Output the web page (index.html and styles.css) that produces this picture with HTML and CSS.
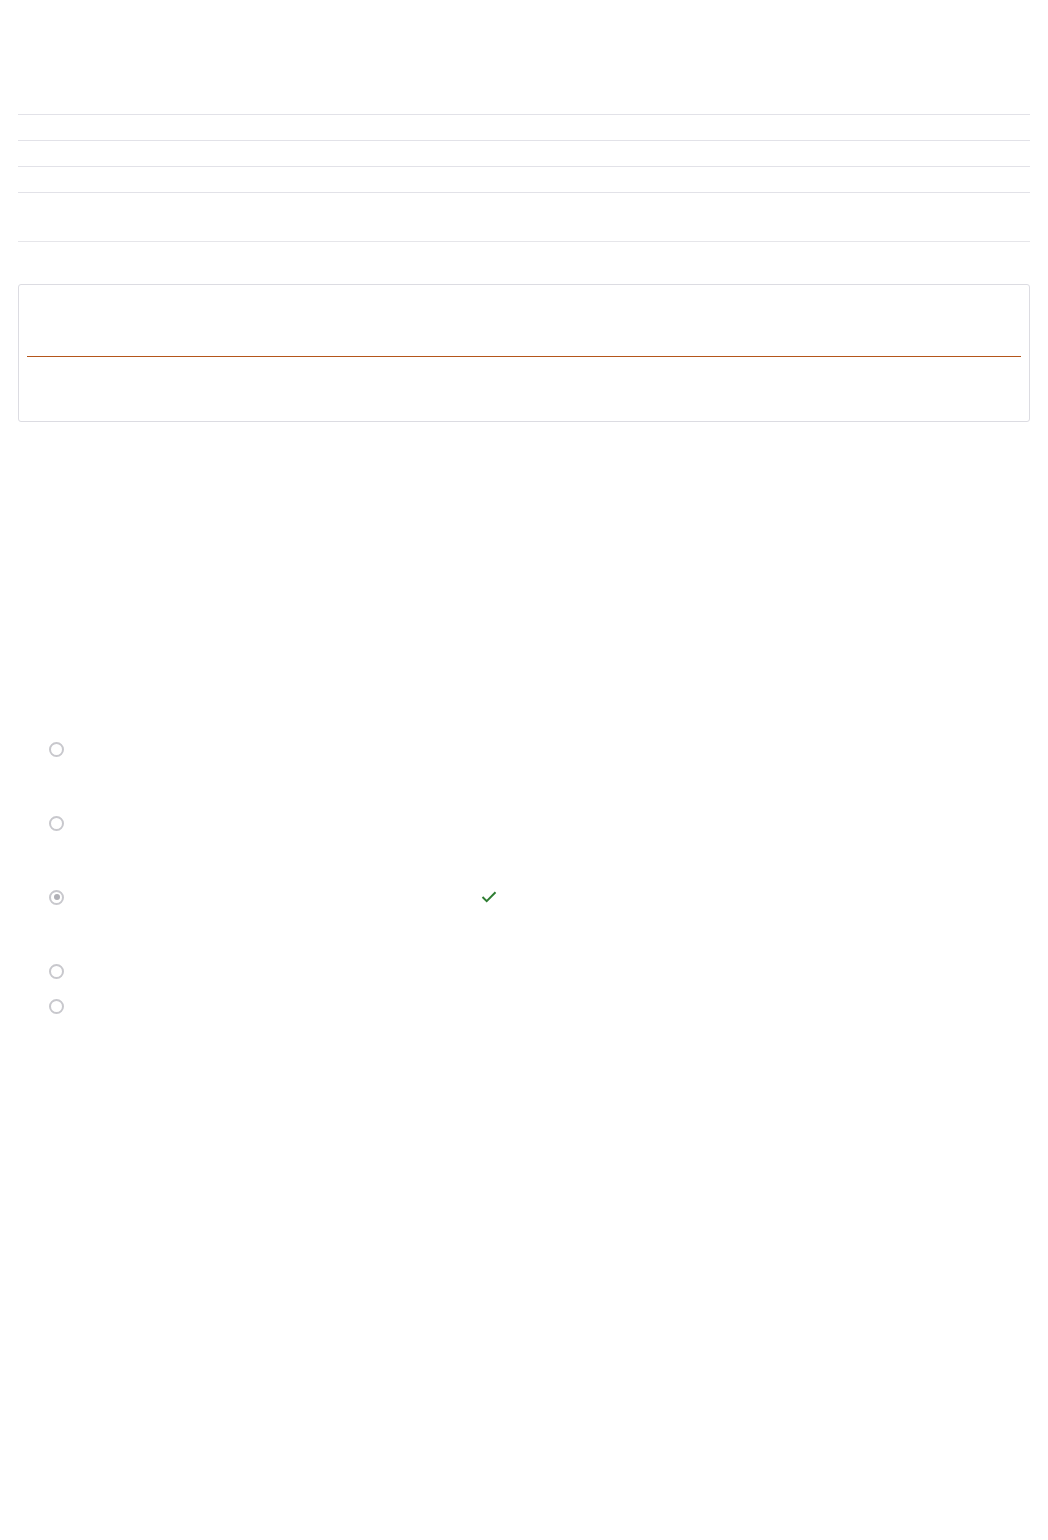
FILE: index.html
```html
<!DOCTYPE html>
<html lang="en">
<head>
<meta charset="utf-8">
<title>Quiz</title>
<link rel="stylesheet" href="styles.css">
</head>
<body>
<div class="page">
  <div class="table">
    <div class="trow"></div>
    <div class="trow"></div>
    <div class="trow"></div>
    <div class="trow tall"></div>
  </div>
  <div class="card">
    <div class="card-head"></div>
    <div class="rule"></div>
    <div class="card-body"></div>
  </div>
  <div class="options">
    <div class="opt"><span class="radio"></span></div>
    <div class="opt"><span class="radio"></span></div>
    <div class="opt"><span class="radio checked"></span>
      <svg class="check" width="16" height="12" viewBox="0 0 16 12"><path d="M1.5 6l4.2 4.2L14.5 1.2" fill="none" stroke="#2e7d32" stroke-width="2"/></svg>
    </div>
    <div class="opt near"><span class="radio"></span></div>
    <div class="opt"><span class="radio"></span></div>
  </div>
</div>
</body>
</html>
```
FILE: styles.css
```css
html, body {
  margin: 0;
  padding: 0;
  background: #ffffff;
  font-family: "Liberation Sans", Arial, sans-serif;
}
.page {
  padding: 114px 18px 0 18px;
}
.table {
  border-top: 1px solid #e2e2e8;
}
.trow {
  height: 25px;
  border-bottom: 1px solid #e2e2e8;
}
.trow.tall {
  height: 48px;
  border-bottom-color: #e6e6ea;
}
.card {
  margin-top: 42px;
  border: 1px solid #dcdce2;
  border-radius: 3px;
  padding: 0 8px;
}
.card-head {
  height: 71px;
}
.rule {
  height: 1px;
  background: #b4561b;
}
.card-body {
  height: 64px;
}
.options {
  margin-top: 320px;
  padding-left: 31px;
}
.opt {
  display: flex;
  align-items: center;
  height: 14px;
  margin-bottom: 60px;
}
.opt.near {
  margin-bottom: 21px;
}
.radio {
  box-sizing: border-box;
  width: 15px;
  height: 15px;
  border: 2px solid #c8c8cd;
  border-radius: 50%;
  display: flex;
  align-items: center;
  justify-content: center;
  flex: none;
}
.radio.checked::after {
  content: "";
  width: 6px;
  height: 6px;
  border-radius: 50%;
  background: #b0b0b6;
}
.check {
  margin-left: 417px;
  flex: none;
}
```
